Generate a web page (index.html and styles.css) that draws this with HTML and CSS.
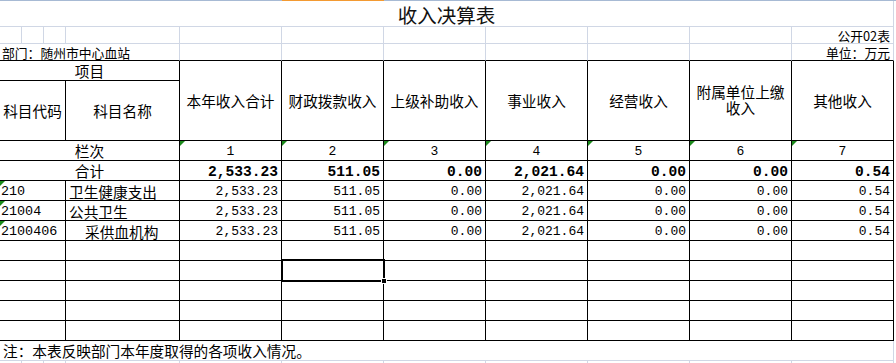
FILE: index.html
```html
<!DOCTYPE html>
<html lang="zh-CN">
<head>
<meta charset="utf-8">
<title>收入决算表</title>
<link rel="stylesheet" href="styles.css">
</head>
<body>
<div class="topbar"><span class="topsel"></span></div>
<div class="sheet">
  <div class="c g title s11">收入决算表</div>

  <div class="c g"></div><div class="c g"></div><div class="c g"></div><div class="c g"></div>
  <div class="c g"></div><div class="c g"></div><div class="c g"></div><div class="c g"></div>
  <div class="c g"></div><div class="c g"></div>
  <div class="c g small r">公开02表</div>

  <div class="c g gb small s4 ov">部门：随州市中心血站</div>
  <div class="c g gb"></div><div class="c g gb"></div><div class="c g gb"></div>
  <div class="c g gb"></div><div class="c g gb"></div><div class="c g gb"></div>
  <div class="c g gb small r">单位：万元</div>

  <div class="c s4 ctr">项目</div>
  <div class="c h r2">本年收入合计</div>
  <div class="c h r2">财政拨款收入</div>
  <div class="c h r2">上级补助收入</div>
  <div class="c h r2">事业收入</div>
  <div class="c h r2">经营收入</div>
  <div class="c h r2"><span class="hw">附属单位上缴<br>收入</span></div>
  <div class="c h r2">其他收入</div>
  <div class="c s3 ctr">科目代码</div>
  <div class="c ctr">科目名称</div>

  <div class="c s4 ctr">栏次</div>
  <div class="c ctr num tri">1</div>
  <div class="c ctr num tri">2</div>
  <div class="c ctr num tri">3</div>
  <div class="c ctr num tri">4</div>
  <div class="c ctr num tri">5</div>
  <div class="c ctr num tri">6</div>
  <div class="c ctr num tri">7</div>

  <div class="c s4 ctr">合计</div>
  <div class="c n b">2,533.23</div>
  <div class="c n b">511.05</div>
  <div class="c n b">0.00</div>
  <div class="c n b">2,021.64</div>
  <div class="c n b">0.00</div>
  <div class="c n b">0.00</div>
  <div class="c n b">0.54</div>

  <div class="c s3 code tri">210</div>
  <div class="c name">卫生健康支出</div>
  <div class="c n">2,533.23</div><div class="c n">511.05</div><div class="c n">0.00</div><div class="c n">2,021.64</div><div class="c n">0.00</div><div class="c n">0.00</div><div class="c n">0.54</div>

  <div class="c s3 code tri">21004</div>
  <div class="c name">公共卫生</div>
  <div class="c n">2,533.23</div><div class="c n">511.05</div><div class="c n">0.00</div><div class="c n">2,021.64</div><div class="c n">0.00</div><div class="c n">0.00</div><div class="c n">0.54</div>

  <div class="c s3 code tri">2100406</div>
  <div class="c name ind">采供血机构</div>
  <div class="c n">2,533.23</div><div class="c n">511.05</div><div class="c n">0.00</div><div class="c n">2,021.64</div><div class="c n">0.00</div><div class="c n">0.00</div><div class="c n">0.54</div>

  <div class="c s3"></div><div class="c"></div><div class="c"></div><div class="c"></div><div class="c"></div><div class="c"></div><div class="c"></div><div class="c"></div><div class="c"></div>
  <div class="c s3"></div><div class="c"></div><div class="c"></div><div class="c active"><span class="selbox"><span class="handle"></span></span></div><div class="c"></div><div class="c"></div><div class="c"></div><div class="c"></div><div class="c"></div>
  <div class="c s3"></div><div class="c"></div><div class="c"></div><div class="c"></div><div class="c"></div><div class="c"></div><div class="c"></div><div class="c"></div><div class="c"></div>
  <div class="c s3"></div><div class="c"></div><div class="c"></div><div class="c"></div><div class="c"></div><div class="c"></div><div class="c"></div><div class="c"></div><div class="c"></div>
  <div class="c s3"></div><div class="c"></div><div class="c"></div><div class="c"></div><div class="c"></div><div class="c"></div><div class="c"></div><div class="c"></div><div class="c"></div>

  <div class="c g note s11">注：本表反映部门本年度取得的各项收入情况。</div>

  <div class="c g"></div><div class="c g"></div><div class="c g"></div><div class="c g"></div>
  <div class="c g"></div><div class="c g"></div><div class="c g"></div><div class="c g"></div>
  <div class="c g"></div><div class="c g"></div><div class="c g"></div>
</div>
</body>
</html>
```

FILE: styles.css
```css
html, body {
  margin: 0;
  padding: 0;
  background: #ffffff;
}
body {
  width: 896px;
  height: 363px;
  overflow: hidden;
  font-family: "Noto Sans CJK SC", "Liberation Sans", sans-serif;
  color: #000;
}
.topbar {
  display: flex;
  height: 1px;
  background: #a7bad4;
}
.topsel {
  margin-left: 282px;
  width: 102px;
  background: #f39a32;
}
.sheet {
  display: grid;
  grid-template-columns: 22px 22px 22px 114px repeat(7, 102px);
  grid-template-rows: 26px 17px 17px 20px 60px 20px 20px 20px 20px 20px 20px 20px 20px 20px 20px 20px 3px;
}
.c {
  box-sizing: border-box;
  border-right: 1px solid #000;
  border-bottom: 1px solid #000;
  display: flex;
  align-items: center;
  font-size: 14.67px;
  line-height: 16px;
  white-space: nowrap;
  overflow: hidden;
  position: relative;
  min-width: 0;
}
.g {
  border-right-color: #d0d7e5;
  border-bottom-color: #d0d7e5;
}
.gb {
  border-bottom-color: #000;
}
.s3 { grid-column: span 3; }
.s4 { grid-column: span 4; }
.s11 { grid-column: span 11; }
.r2 { grid-row: span 2; }
.ov { overflow: visible; }
.title {
  justify-content: center;
  align-items: center;
  padding-top: 2px;
  font-size: 19.5px;
  line-height: 24px;
  color: #111;
  overflow: visible;
}
.small {
  font-size: 12.8px;
  line-height: 15px;
  padding-left: 2px;
  overflow: visible;
}
.r {
  justify-content: flex-end;
  padding-right: 3px;
}
.ctr {
  justify-content: center;
}
.h {
  justify-content: center;
  text-align: center;
  white-space: normal;
}
.hw {
  display: block;
  line-height: 16px;
  margin-top: -2px;
}
.num {
  font-family: "Liberation Mono", monospace;
  font-size: 13px;
  padding-top: 2px;
}
.n {
  justify-content: flex-end;
  padding-right: 3px;
  padding-top: 2px;
  font-family: "Liberation Mono", monospace;
  font-size: 13px;
}
.b {
  font-weight: bold;
  font-size: 14.6px;
}
.code {
  padding-left: 1px;
  padding-top: 2px;
  font-family: "Liberation Mono", monospace;
  font-size: 13.4px;
}
.name {
  padding-left: 3px;
  padding-top: 2px;
}
.ind {
  padding-left: 19px;
}
.tri::before {
  content: "";
  position: absolute;
  left: 0;
  top: 0;
  border-top: 5px solid #1b8a1b;
  border-right: 5px solid transparent;
}
.note {
  padding-left: 3px;
  padding-top: 1px;
}
.active {
  overflow: visible;
  z-index: 2;
}
.selbox {
  position: absolute;
  left: -1px;
  top: -2px;
  width: 104px;
  height: 23px;
  box-sizing: border-box;
  border: 2px solid #000;
  box-shadow: inset 0 0 0 1px #fff;
}
.handle {
  position: absolute;
  right: -4px;
  bottom: -4px;
  width: 4px;
  height: 4px;
  background: #000;
  border: 1px solid #fff;
}
```
